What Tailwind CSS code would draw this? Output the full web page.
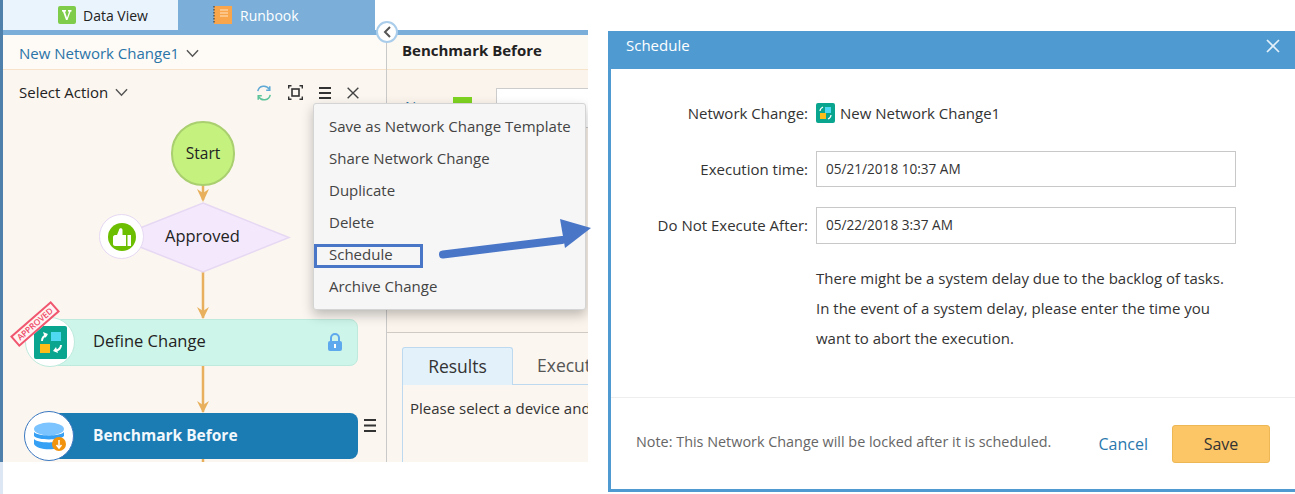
<!DOCTYPE html>
<html><head><meta charset="utf-8">
<script src="https://cdn.jsdelivr.net/npm/@tailwindcss/browser@4"></script>
</head>
<body class="bg-white overflow-hidden">
<div class="relative w-[1295px] h-[494px] overflow-hidden flex font-['Open_Sans',sans-serif] text-[#222]">
  <div class="absolute left-0 top-[462px] w-[3px] h-[32px] bg-[#dce7f3]"></div>
  <!-- left screenshot -->
  <div class="relative w-[588px] h-[462px] shrink-0 overflow-hidden flex flex-col border-l-[3px] border-[#4f80ab]">
    <div class="flex h-[30px] shrink-0 bg-white">
      <div class="w-[175px] bg-[#eaf4fd] flex items-center pl-[55px] gap-[7px] text-[14px] text-[#222]">
        <svg width="18" height="18" viewBox="0 0 18 18"><rect width="18" height="18" rx="2" fill="#7fcc4a"/><path d="M4 4h4v1.500l-1 .3 2 6 2-6-1-.3V4h3.500v1.500l-1 .3-3 8.200h-1.500l-3-8.200-1-.3z" fill="#fff"/></svg>
        <span>Data View</span>
      </div>
      <div class="w-[197px] bg-[#7bafd9] flex items-center pl-[35px] gap-[8px] text-[14px] text-white">
        <svg width="19" height="20" viewBox="0 0 19 20"><rect x="1" y="1" width="18" height="18" fill="#f9a54c"/><path d="M1 1v18" stroke="#555" stroke-width="1.500" stroke-dasharray="1.500 1.500"/><path d="M7 5h8M7 8h8M7 11h8" stroke="#ffe3bf" stroke-width="1.200"/></svg>
        <span>Runbook</span>
      </div>
    </div>
    <div class="flex h-[5px] shrink-0 bg-[#7bafd9]"></div>
    <div class="flex flex-1 min-h-0">
      <!-- left pane -->
      <div class="w-[384px] shrink-0 flex flex-col border-r border-[#c9c9c9] bg-[#fbf6f0]">
        <div class="h-[35px] shrink-0 bg-[#fefaf5] border-b border-[#f6e3ca] flex items-center pl-[16px] pt-[3px] gap-[7px] text-[15px] text-[#2a74a8]">
          <span>New Network Change1</span>
          <svg width="13" height="9" viewBox="0 0 14 9" fill="none" stroke="#555" stroke-width="1.500"><path d="M1 1l6 6.500L13 1"/></svg>
        </div>
        <div class="h-[45px] shrink-0 flex items-center pl-[16px] pr-[27px] text-[15px]">
          <span>Select Action</span>
          <svg class="ml-[7px]" width="13" height="9" viewBox="0 0 14 9" fill="none" stroke="#555" stroke-width="1.500"><path d="M1 1l6 6.500L13 1"/></svg>
          <div class="ml-auto flex items-center gap-[16px]">
            <svg width="16" height="16" viewBox="0 0 18 18" fill="none" stroke-width="1.700"><path d="M2 7a7 7 0 0 1 13-2" stroke="#5fa9d6"/><path d="M15.500 1.500V6h-4" stroke="#5fa9d6"/><path d="M16 11a7 7 0 0 1-13 2" stroke="#5cc39a"/><path d="M2.500 16.500V12h4" stroke="#5cc39a"/></svg>
            <svg width="15" height="15" viewBox="0 0 15 15" fill="none" stroke="#333" stroke-width="1.400"><path d="M.7 3.500V.7H3.500M11.500 .7h2.800V3.500M14.300 11.500v2.800H11.500M3.500 14.300H.7V11.500"/><rect x="4" y="4" width="7" height="7" stroke-width="1.600"/></svg>
            <svg width="12" height="12" viewBox="0 0 12 12" fill="#333"><rect width="12" height="2"/><rect y="5" width="12" height="2"/><rect y="10" width="12" height="2"/></svg>
            <svg width="12" height="12" viewBox="0 0 13 13" fill="none" stroke="#444" stroke-width="1.500"><path d="M.7.7l11.600 11.600M12.300.7L.7 12.300"/></svg>
          </div>
        </div>
        <div class="flex-1"></div>
      </div>
      <!-- right pane -->
      <div class="flex-1 min-w-0 flex flex-col overflow-hidden bg-[#fbf6f0]">
        <div class="h-[35px] shrink-0 bg-[#fcf8f2] border-b border-[#f6e3ca] flex items-center pl-[15px] pb-[3px] text-[15px] font-bold whitespace-nowrap">Benchmark Before</div>
        <div class="h-[263px] shrink-0 border-b border-[#cfcac4] bg-[#fbf4ec] relative">
          <div class="absolute left-[18px] top-[25px] text-[15px] text-[#2a74a8]">N</div>
          <div class="absolute left-[66px] top-[27px] w-[19px] h-[20px] bg-[#7ed321]"></div>
          <div class="absolute left-[109px] top-[18px] right-0 h-[40px] bg-white border border-[#ccc] border-r-0"></div>
        </div>
        <div class="flex-1 pl-[15px] pt-[14px] flex flex-col min-h-0">
          <div class="flex h-[38px] shrink-0">
            <div class="w-[111px] bg-[#e3f1fb] border border-b-0 border-[#bcd9f0] rounded-t-[3px] flex items-center justify-center text-[17.500px] text-[#333]">Results</div>
            <div class="flex-1 border-b border-[#bcd9f0] pl-[24px] flex items-center text-[17.500px] text-[#555] whitespace-nowrap overflow-hidden">Execution</div>
          </div>
          <div class="flex-1 border-l border-[#bcd9f0] pl-[7px] pt-[12px] text-[15px] text-[#333] whitespace-nowrap overflow-hidden">Please select a device and</div>
        </div>
      </div>
    </div>

    <!-- flow diagram -->
    <svg class="absolute left-[-3px] top-0" width="390" height="462" viewBox="0 0 390 462" fill="none">
      <path d="M203 185V200M203 272V318M203 365V412M203 459V462" stroke="#e8b05c" stroke-width="2.500"/>
      <path d="M197 189l6 4 6-4-6 13zM197 307l6 4 6-4-6 12zM197 401l6 4 6-4-6 12z" fill="#e8b05c"/>
      <path d="M203 203L289 237.500L203 272L116 237.500z" fill="#f3e8fc" stroke="#e6d8f3" stroke-width="1.500"/>
    </svg>
    <div class="absolute left-[168px] top-[121px] w-[64px] h-[65px] rounded-full bg-[#c5f27f] border-[2px] border-[#a9cf6f] flex items-center justify-center text-[15.500px] font-medium">Start</div>
    <div class="absolute left-[96px] top-[214px] w-[45px] h-[45px] rounded-full bg-white border border-[#e6d8f3] flex items-center justify-center">
      <svg width="28" height="28" viewBox="0 0 28 28"><circle cx="14" cy="14" r="14" fill="#6cbf00"/><path d="M5 14c0-1 1-2 2-2h2l2-5c0-2.500 3.500-2.500 3.500 0v5H18v11H7c-1 0-2-1-2-2z" fill="#fff"/><rect x="19.500" y="12" width="3.500" height="11" fill="#fff"/></svg>
    </div>
    <div class="absolute left-[162px] top-[224px] text-[16.500px] font-medium">Approved</div>

    <div class="absolute left-[47px] top-[319px] w-[308px] h-[47px] rounded-[8px] bg-[#cdf5e9] border border-[#bdeadc] flex items-center pl-[42px] pb-[2px] text-[16.500px] font-medium">
      <span>Define Change</span>
      <svg class="absolute right-[14px] top-[13px]" width="16" height="19" viewBox="0 0 16 19"><path d="M4 8V5a4 4 0 0 1 8 0v3" fill="none" stroke="#5ea8ee" stroke-width="2"/><rect x="1" y="8" width="14" height="10" rx="2" fill="#5ea8ee"/><rect x="7" y="11" width="2" height="4" fill="#fff"/></svg>
    </div>
    <div class="absolute left-[22px] top-[317px] w-[50px] h-[50px] rounded-full bg-white border border-[#bdeadc] flex items-center justify-center">
      <svg class="ml-[1px]" width="33" height="33" viewBox="0 0 33 33"><rect width="33" height="33" rx="2" fill="#0aa58f"/><rect x="17" y="6" width="10" height="9" fill="#4fd8f2"/><rect x="6" y="18" width="10" height="9" fill="#ffbd1a"/><path d="M8 15c0-3 1.500-5 5-6M27 19c0 3-2 5-6 6" stroke="#fff" stroke-width="2" fill="none"/><path d="M9 6l5 2-3 4zM24 27l-5-2 3-4z" fill="#fff"/></svg>
    </div>
    <div class="absolute left-[5px] top-[317px] w-[54px] h-[14px] rotate-[-41deg] border-[2px] border-[#f0566e] bg-[#fff3f3] flex items-center justify-center text-[8.500px] font-semibold leading-none text-[#ee4a66]">APPROVED</div>

    <div class="absolute left-[47px] top-[413px] w-[308px] h-[46px] rounded-[8px] bg-[#1b7bb3] flex items-center pl-[43px] text-[15.500px] font-bold text-[#f2f8fc]">Benchmark Before</div>
    <div class="absolute left-[21px] top-[411px] w-[50px] h-[50px] rounded-full bg-white border border-[#3a77c0] flex items-center justify-center">
      <svg class="ml-[3px]" width="34" height="34" viewBox="0 0 34 34"><ellipse cx="15" cy="10" rx="15" ry="6.500" fill="#7cc4ff"/><path d="M0 13c3 4.500 27 4.500 30 0v4c-3 4.500-27 4.500-30 0z" fill="#36a0f5"/><path d="M0 20c3 4.500 27 4.500 30 0v5c-3 7-27 7-30 0z" fill="#36a0f5"/><circle cx="25" cy="25" r="7" fill="#f2930d"/><path d="M25 21v7M22.500 26l2.500 3 2.500-3" stroke="#fff" stroke-width="1.500" fill="none"/></svg>
    </div>
    <svg class="absolute left-[361px] top-[419px]" width="12" height="13" viewBox="0 0 12 13" fill="#333"><rect width="12" height="2"/><rect y="5.500" width="12" height="2"/><rect y="11" width="12" height="2"/></svg>

    <!-- collapse button -->
    <div class="absolute left-[373px] top-[21px] w-[22px] h-[22px] rounded-full bg-white border-[2px] border-[#a9cdeb] flex items-center justify-center">
      <svg width="8" height="12" viewBox="0 0 8 12" fill="none" stroke="#555" stroke-width="2"><path d="M7 1L2 6l5 5"/></svg>
    </div>

    <!-- menu -->
    <div class="absolute left-[310px] top-[103px] w-[273px] h-[207px] bg-[#f6f6f6] border border-[#d4d4d4] rounded-[3px] shadow-[0_5px_12px_rgba(0,0,0,0.25)] pt-[6px] pl-[15px] text-[15px] text-[#444] leading-[32px] whitespace-nowrap">
      <div>Save as Network Change Template</div>
      <div>Share Network Change</div>
      <div>Duplicate</div>
      <div>Delete</div>
      <div>Schedule</div>
      <div>Archive Change</div>
    </div>
    <div class="absolute left-[311px] top-[244px] w-[109px] h-[24px] border-[3px] border-[#4a76c8]"></div>
  </div>

  <!-- dialog -->
  <div class="ml-[20px] mt-[31px] w-[687px] h-[461px] shrink-0 flex flex-col border-l-[3px] border-b-[3px] border-[#4f9bd1] bg-white">
    <div class="h-[38px] shrink-0 -ml-[3px] bg-[#4f9bd1] flex items-center justify-between pl-[18px] pr-[15px] pb-[9px] text-[15px] text-white">
      <span>Schedule</span>
      <svg width="14" height="14" viewBox="0 0 14 14" fill="none" stroke="#e4f1fa" stroke-width="1.700"><path d="M1 1l12 12M13 1L1 13"/></svg>
    </div>
    <div class="h-[329px] shrink-0 border-b border-[#eee] pt-[31px] text-[15px] text-[#333]">
      <div class="flex items-center h-[26px]">
        <div class="w-[197px] text-right">Network Change:</div>
        <svg class="ml-[8px]" width="19" height="20" viewBox="0 0 19 20"><rect width="19" height="20" rx="2" fill="#0aa58f"/><rect x="9" y="4" width="6" height="6" fill="#4fd8f2"/><rect x="4" y="10" width="6" height="6" fill="#ffbd1a"/><path d="M4 8c0-2 1-3 3-4M15 12c0 2-1 3-3 4" stroke="#fff" stroke-width="1.200" fill="none"/></svg>
        <span class="ml-[5px]">New Network Change1</span>
      </div>
      <div class="flex items-center mt-[25px] h-[36px]">
        <div class="w-[197px] text-right">Execution time:</div>
        <div class="ml-[8px] w-[420px] h-[36px] border border-[#c8c8c8] flex items-center pl-[9px] text-[13.600px]">05/21/2018 10:37 AM</div>
      </div>
      <div class="flex items-center mt-[20px] h-[37px]">
        <div class="w-[197px] text-right">Do Not Execute After:</div>
        <div class="ml-[8px] w-[420px] h-[37px] border border-[#c8c8c8] flex items-center pl-[9px] text-[13.600px]">05/22/2018 3:37 AM</div>
      </div>
      <div class="ml-[205px] mt-[19px] leading-[30px]">
        <div>There might be a system delay due to the backlog of tasks.</div>
        <div>In the event of a system delay, please enter the time you</div>
        <div>want to abort the execution.</div>
      </div>
    </div>
    <div class="flex-1 flex items-center pl-[25px] pr-[25px]">
      <span class="text-[14.400px] text-[#666] pb-[3px]">Note: This Network Change will be locked after it is scheduled.</span>
      <span class="ml-auto text-[16px] text-[#2a78ad]">Cancel</span>
      <div class="ml-[24px] w-[98px] h-[38px] bg-[#fcc566] border border-[#eeb755] rounded-[3px] flex items-center justify-center text-[16px] text-[#333]">Save</div>
    </div>
  </div>

  <!-- callout arrow -->
  <svg class="absolute left-[430px] top-[210px]" width="170" height="60" viewBox="0 0 170 60">
    <path d="M13 44.500L132 30" stroke="#4a76c8" stroke-width="8" stroke-linecap="round"/>
    <path d="M130 9L161 18L135 38z" fill="#4a76c8"/>
  </svg>
</div>
</body></html>
